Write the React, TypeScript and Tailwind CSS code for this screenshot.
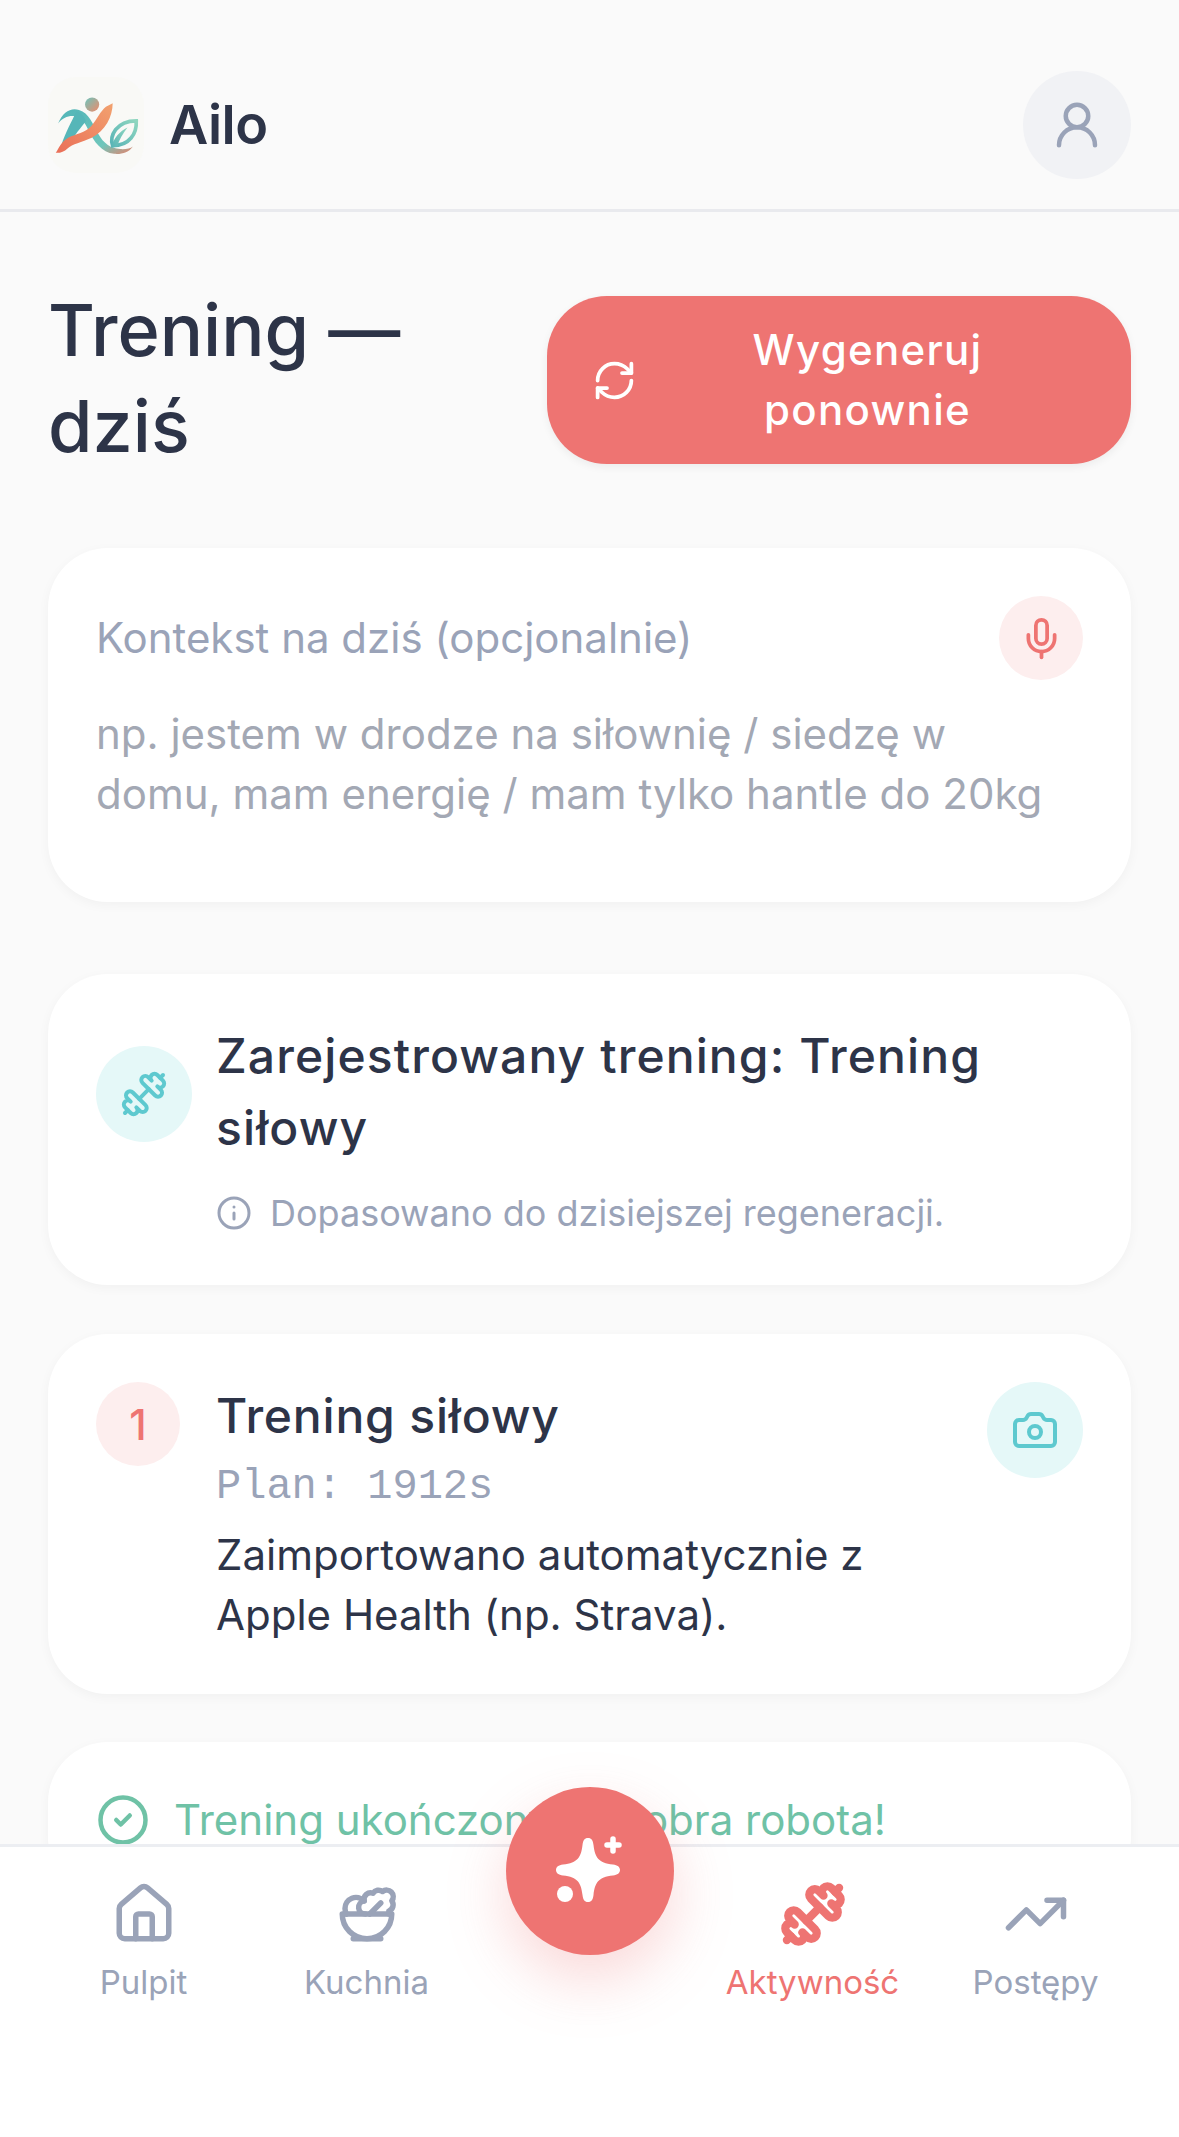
import React from 'react';
import {
  Camera,
  CircleCheck,
  Dumbbell,
  House,
  Info,
  Mic,
  RefreshCw,
  Salad,
  TrendingUp,
  UserRound,
} from 'lucide-react';

function Logo() {
  return (
    <div className="h-[96px] w-[96px] shrink-0 rounded-[28px] bg-[#f9f9f6]">
      <svg viewBox="0 0 285 285" className="h-full w-full">
        <defs>
          <linearGradient id="head" x1="0" y1="0" x2="1" y2="1">
            <stop offset="0" stopColor="#6cc5bd" />
            <stop offset="1" stopColor="#ef8a6a" />
          </linearGradient>
          <linearGradient id="orange" x1="1" y1="0" x2="0" y2="1">
            <stop offset="0" stopColor="#f2a26f" />
            <stop offset="1" stopColor="#ea6f58" />
          </linearGradient>
          <linearGradient id="teal" x1="0" y1="0" x2="1" y2="1">
            <stop offset="0" stopColor="#52b5b8" />
            <stop offset="0.7" stopColor="#6fc6bb" />
            <stop offset="1" stopColor="#e9826a" />
          </linearGradient>
          <linearGradient id="leaf" x1="1" y1="0" x2="0" y2="1">
            <stop offset="0" stopColor="#8fd6bf" />
            <stop offset="1" stopColor="#58b4b6" />
          </linearGradient>
        </defs>
        <circle cx="131" cy="82" r="21" fill="url(#head)" />
        <path d="M30 138C44 104 68 90 92 98C122 106 132 140 150 170C164 196 186 212 214 214C232 215 244 212 252 206C240 224 218 230 196 228C160 224 136 192 120 158C108 132 96 118 78 116C60 114 42 122 30 138Z" fill="url(#teal)" />
        <path d="M84 102C98 106 110 118 112 132C98 150 78 172 66 198L40 202C50 168 72 130 84 102Z" fill="#56b6b8" />
        <path d="M192 78C192 118 170 160 130 180C100 194 72 198 58 212C48 222 36 226 23 225C32 212 38 192 60 180C84 168 110 166 128 146C144 128 156 100 172 88Z" fill="url(#orange)" />
        <path d="M262 130C264 168 242 204 192 204C182 176 202 130 262 130Z" fill="none" stroke="url(#leaf)" strokeWidth="11" />
        <path d="M188 210C194 182 214 160 236 150C222 168 210 188 206 206Z" fill="url(#leaf)" />
      </svg>
    </div>
  );
}

function FabIcon() {
  return (
    <svg viewBox="0 0 96 96" className="h-[96px] w-[96px] translate-y-[-1px]" fill="#fff">
      <path d="M46 16C49.5 16 51 18.5 51.5 23C53 35 56 41 71 42.5C75.5 43 78 45 78 48C78 51 75.5 53 71 53.5C56 55 53 61 51.5 73C51 77.5 49.5 80 46 80C42.5 80 41 77.5 40.5 73C39 61 36 55 21 53.5C16.5 53 14 51 14 48C14 45 16.5 43 21 42.5C36 41 39 35 40.5 23C41 18.5 42.5 16 46 16Z" />
      <path d="M71 17v12M65 23h12" stroke="#fff" strokeWidth="5.5" strokeLinecap="round" />
      <circle cx="23" cy="72" r="8" />
    </svg>
  );
}

function NavItem({ icon, label, active }: { icon: React.ReactNode; label: string; active?: boolean }) {
  return (
    <div className={`flex flex-col items-center ${active ? 'text-[#ee7472]' : 'text-[#9aa3b8]'}`}>
      {icon}
      <span className="mt-[8px] text-[33px] leading-[54px]">{label}</span>
    </div>
  );
}

export default function App() {
  return (
    <div className="flex h-[2137px] w-full flex-col overflow-hidden bg-[#fafafa] font-['Inter',sans-serif] text-[#2d3448]">
      <header className="flex h-[212px] shrink-0 items-center justify-between border-b-[3px] border-[#e9eaee] px-[48px] pt-[40px]">
        <div className="flex items-center gap-[25px]">
          <Logo />
          <span className="text-[54px] font-semibold leading-none tracking-[-0.5px]">Ailo</span>
        </div>
        <div className="flex h-[108px] w-[108px] items-center justify-center rounded-full bg-[#f1f2f5] text-[#9aa3b8]">
          <UserRound size={54} />
        </div>
      </header>

      <main className="min-h-0 flex-1 overflow-hidden px-[48px] pt-[72px]">
        <div className="flex items-center justify-between">
          <h1 className="-mt-[2px] w-[440px] pb-[2px] text-[72px] font-medium leading-[96px]">Trening — dziś</h1>
          <button className="flex h-[168px] w-[584px] items-center gap-[12px] rounded-[60px] bg-[#ee7472] px-[45px] text-white shadow-[0_3px_9px_rgba(0,0,0,0.06)]">
            <RefreshCw size={45} className="shrink-0" />
            <span className="flex-1 px-[60px] text-center text-[42px] font-medium leading-[60px] tracking-[1.3px]">Wygeneruj ponownie</span>
          </button>
        </div>

        <section className="mt-[72px] h-[354px] rounded-[60px] bg-white p-[48px] shadow-[0_3px_12px_rgba(0,0,0,0.04)]">
          <div className="flex items-center justify-between">
            <span className="text-[42px] leading-[60px] text-[#9aa3b8]">Kontekst na dziś (opcjonalnie)</span>
            <div className="flex h-[84px] w-[84px] items-center justify-center rounded-full bg-[#fdeeee] text-[#ee7472]">
              <Mic size={45} />
            </div>
          </div>
          <p className="mt-[24px] pr-[24px] text-[42px] leading-[60px] text-[#a3a8b4]">
            np. jestem w drodze na siłownię / siedzę w domu, mam energię / mam tylko hantle do 20kg
          </p>
        </section>

        <section className="mt-[72px] h-[311px] rounded-[60px] bg-white p-[48px] shadow-[0_3px_12px_rgba(0,0,0,0.04)]">
          <div className="flex items-center gap-[24px]">
            <div className="flex h-[96px] w-[96px] shrink-0 items-center justify-center rounded-full bg-[#e5f8f8] text-[#5ec9cf]">
              <Dumbbell size={48} />
            </div>
            <h2 className="-mt-[2px] pb-[2px] text-[48px] font-medium leading-[72px] tracking-[1.1px]">Zarejestrowany trening: Trening siłowy</h2>
          </div>
          <div className="mt-[20px] flex items-center gap-[18px] pl-[120px] text-[#9aa3b8]">
            <Info size={36} className="shrink-0" />
            <span className="text-[36px] leading-[54px]">Dopasowano do dzisiejszej regeneracji.</span>
          </div>
        </section>

        <section className="mt-[49px] flex h-[360px] items-start rounded-[60px] bg-white p-[48px] shadow-[0_3px_12px_rgba(0,0,0,0.04)]">
          <div className="flex h-[84px] w-[84px] shrink-0 items-center justify-center rounded-full bg-[#fdeeee] text-[42px] font-medium text-[#ee7472]">
            1
          </div>
          <div className="ml-[36px] min-w-0 flex-1">
            <h3 className="-mt-[2px] pb-[2px] text-[48px] font-medium leading-[72px] tracking-[0.8px]">Trening siłowy</h3>
            <p className="translate-y-[3px] font-['Liberation_Mono',monospace] text-[42px] leading-[60px] text-[#9aa3b8]">Plan: 1912s</p>
            <p className="mt-[11px] w-[700px] text-[42px] leading-[60px]">
              Zaimportowano automatycznie z Apple Health (np. Strava).
            </p>
          </div>
          <div className="flex h-[96px] w-[96px] shrink-0 items-center justify-center rounded-full bg-[#e5f8f8] text-[#5ec9cf]">
            <Camera size={48} />
          </div>
        </section>

        <section className="mt-[48px] flex items-center gap-[24px] rounded-[60px] bg-white p-[48px] text-[#6fc2a6] shadow-[0_3px_12px_rgba(0,0,0,0.04)]">
          <CircleCheck size={54} className="shrink-0" />
          <span className="text-[42px] leading-[60px]">Trening ukończony — dobra robota!</span>
        </section>
      </main>

      <nav className="relative z-10 h-[293px] shrink-0 border-t-[3px] border-[#eceef2] bg-white px-[32px] pt-[34px]">
        <div className="grid grid-cols-5">
          <NavItem icon={<House size={66} />} label="Pulpit" />
          <NavItem icon={<Salad size={66} />} label="Kuchnia" />
          <div />
          <NavItem icon={<Dumbbell size={66} strokeWidth={3} />} label="Aktywność" active />
          <NavItem icon={<TrendingUp size={66} />} label="Postępy" />
        </div>
        <button className="absolute left-[506px] top-[-60px] flex h-[168px] w-[168px] items-center justify-center rounded-full bg-[#ee7472] shadow-[0_24px_60px_rgba(238,116,114,0.28)]">
          <FabIcon />
        </button>
      </nav>
    </div>
  );
}
